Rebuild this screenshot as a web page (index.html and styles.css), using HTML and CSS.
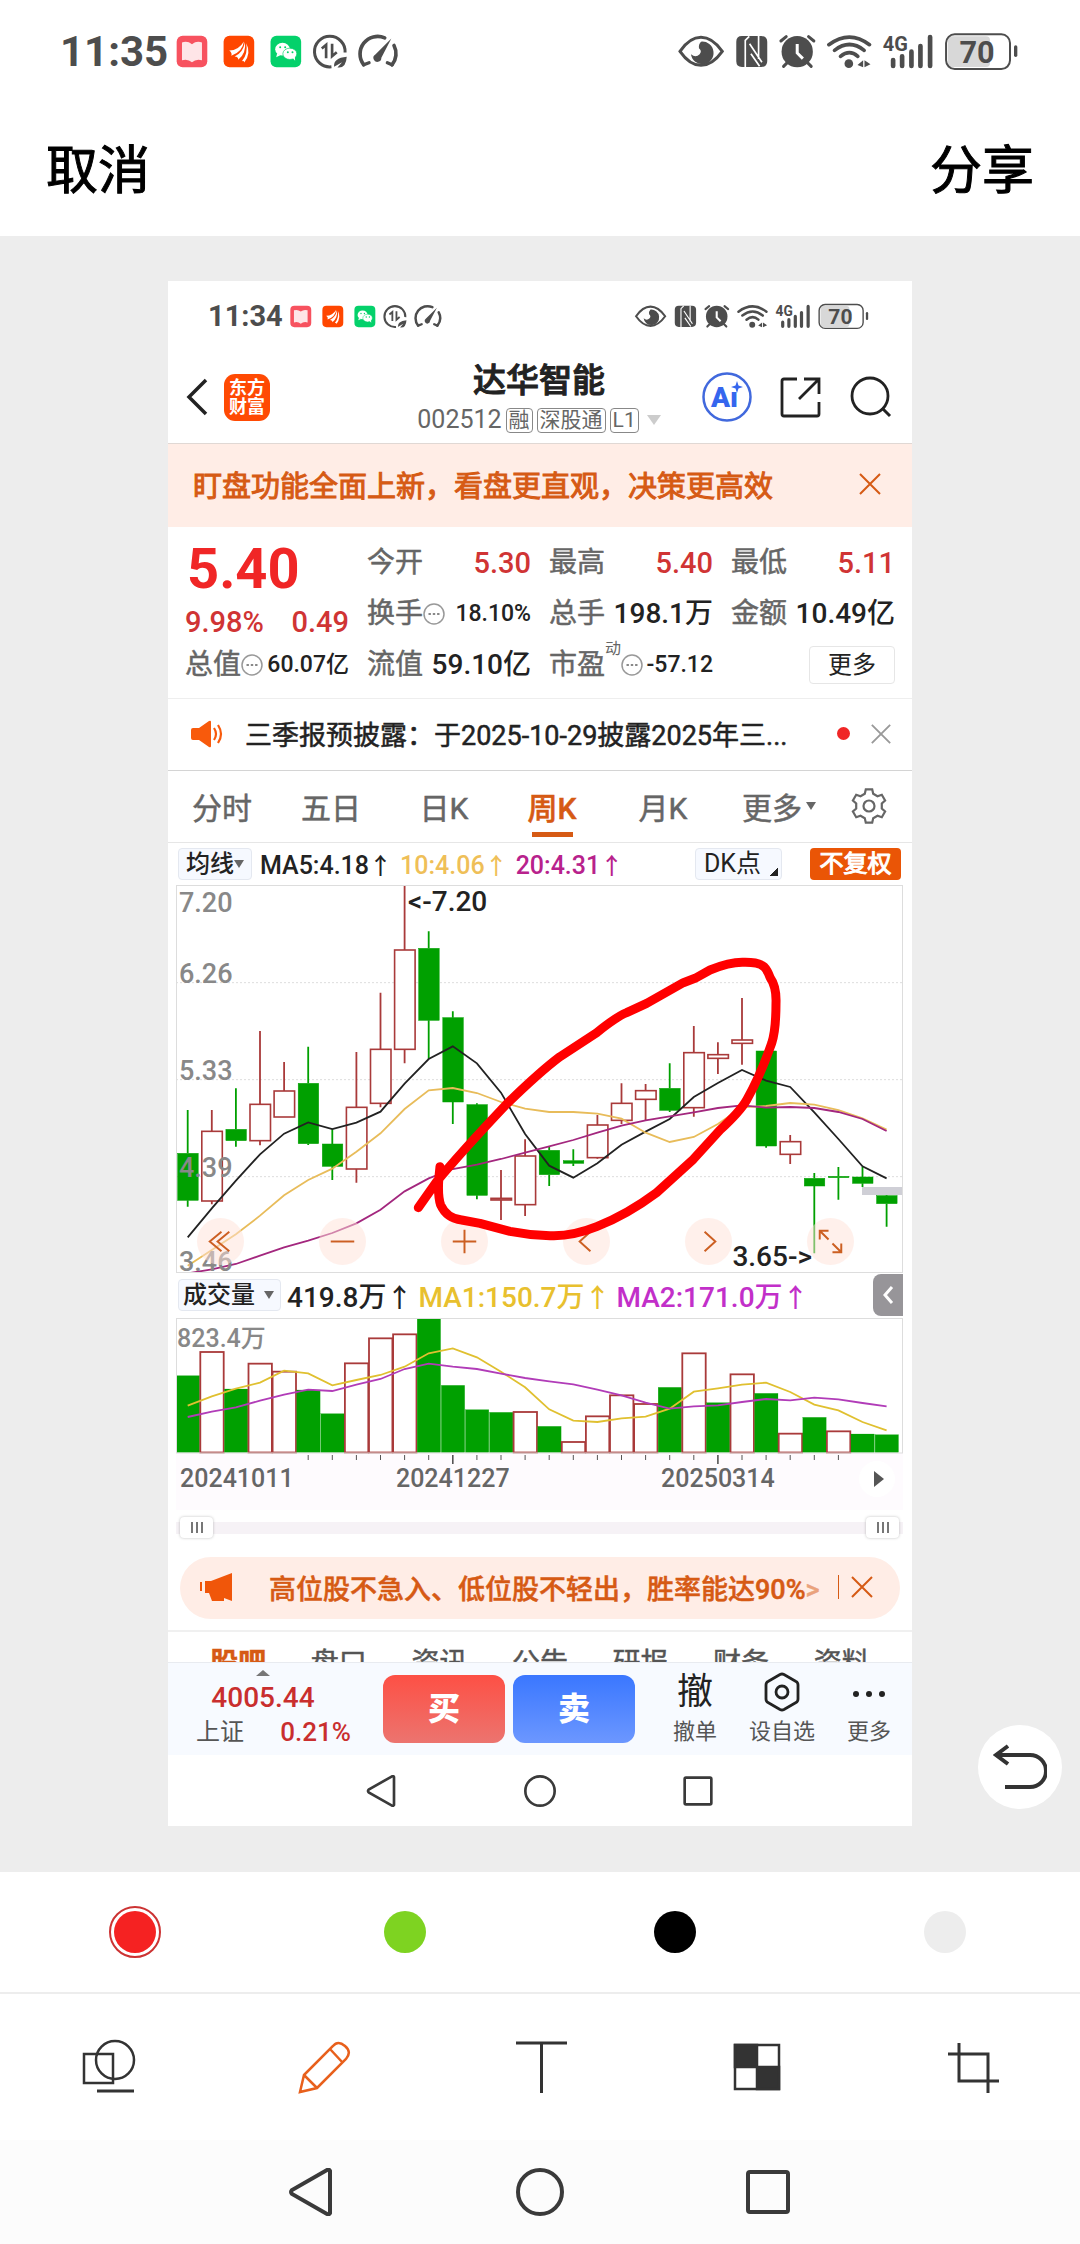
FILE: index.html
```html
<!DOCTYPE html>
<html lang="zh-CN">
<head>
  <meta charset="UTF-8" />
  <meta name="viewport" content="width=device-width, initial-scale=1.0"/>
  <title>编辑截图</title>
  <link rel="stylesheet" href="styles.css">
</head>
<body>

  <!-- shared icons -->
  <svg class="defs" aria-hidden="true">
    <symbol id="status-left" viewBox="380 36 670 110">
      <rect x="382" y="44" width="92" height="94" rx="18" fill="#f7525f"/>
      <path d="M398 64q16-6 30 5 14-11 30-5v53q-18-5-30 6-12-11-30-6z" fill="#fff" opacity=".85"/>
      <rect x="523" y="44" width="92" height="94" rx="18" fill="#ff4600"/>
      <path d="M540 88q28 0 44-27-4 31-38 43 4-8-6-16zM556 106q26-12 31-43 5 32-20 53 1-9-11-10zM578 120q19-22 13-54 16 30-6 58 0-6-7-4z" fill="#fff"/>
      <rect x="664" y="44" width="92" height="94" rx="18" fill="#04d16b"/>
      <ellipse cx="700" cy="84" rx="22" ry="19" fill="#fff"/><path d="M684 96l-3 12 12-6z" fill="#fff"/>
      <ellipse cx="722" cy="98" rx="21" ry="17" fill="#fff" stroke="#04d16b" stroke-width="2"/><path d="M730 110l8 9-1-14z" fill="#fff"/>
      <g fill="#04d16b"><circle cx="693" cy="78" r="3"/><circle cx="708" cy="78" r="3"/><circle cx="716" cy="93" r="3"/><circle cx="730" cy="93" r="3"/></g>
      <g fill="none" stroke="#4d4d4d" stroke-width="9">
        <path d="M847 137A46 46 0 1 1 888 94"/>
        <path d="M818 82l13-11v40M849 68v37l14-12" stroke-width="8"/>
        <path d="M944 131A53 53 0 0 1 1007 50M1035 73A53 53 0 0 1 1029 131" stroke-width="11" stroke-linecap="round"/>
        <path d="M944 131l16-6M1029 131l-14-6" stroke-width="10" stroke-linecap="round"/>
      </g>
      <path d="M855 137q-3-26 38-30-2 36-28 32l14-16z" fill="#4d4d4d"/>
      <path d="M979 100l48-48-30 58a12 12 0 1 1-18-10z" fill="#4d4d4d"/>
    </symbol>
    <symbol id="status-right" viewBox="20 30 1030 120">
      <g fill="none" stroke="#4d4d4d" stroke-linecap="round">
        <path d="M29 91Q58 49 92 49t64 42q-30 42-64 42T29 91z" stroke-width="9"/>
        <path d="M332 60l16-13M431 60l-16-13M340 136l12-12M423 136l-12-12" stroke-width="9"/>
        <path d="M476 71Q538 25 598 71" stroke-width="11"/><path d="M493 88Q538 53 582 88" stroke-width="11"/><path d="M511 106Q538 84 563 106" stroke-width="11"/>
        <path d="M669 117v18M696 106v29M724 92v43M751 75v60M780 48v87" stroke-width="14"/>
        <path d="M1037 78v25" stroke-width="10"/>
      </g>
      <path d="M92 62a34 34 0 1 1-30 38q14 12 26 0 8-10-2-18-2-12 6-20z" fill="#4d4d4d"/>
      <path d="M215 45h58q18 0 18 18v57q0 18-18 18h-58q-17 0-17-18V63q0-18 17-18z" fill="#4d4d4d"/>
      <path d="M225 138V58l12-12M265 45v69M238 68l37 56M242 98l26 38" fill="none" stroke="#fff" stroke-width="5"/>
      <circle cx="381" cy="92" r="47" fill="#4d4d4d"/><path d="M381 69v27l17 17" fill="none" stroke="#fff" stroke-width="9"/>
      <circle cx="536" cy="128" r="13" fill="#4d4d4d"/><path d="M562 132l17-14v21zM583 118v21l18-9z" fill="#4d4d4d"/>
      <text x="638" y="90" font-size="60" font-weight="700" fill="#4d4d4d">4G</text>
      <rect x="834" y="46" width="126" height="92" rx="12" fill="#d8d8d8"/>
      <rect x="828" y="40" width="192" height="104" rx="26" fill="none" stroke="#4d4d4d" stroke-width="6"/>
      <text x="921" y="125" font-size="92" font-weight="700" text-anchor="middle" fill="#4d4d4d">70</text>
    </symbol>
    <symbol id="close" viewBox="0 0 24 24"><path d="M2 2l20 20M22 2L2 22" fill="none" stroke="currentColor" stroke-width="2"/></symbol>
    <symbol id="dots" viewBox="0 0 22 22"><circle cx="11" cy="11" r="10" fill="none" stroke="#999" stroke-width="1.5"/><path d="M5.500 11h2.400M9.800 11h2.400M14.100 11h2.400" stroke="#888" stroke-width="2.200"/></symbol>
    <symbol id="nav-back" viewBox="0 0 48 48"><path d="M42 3v42q-1 2-3 1L4 26q-2-2 0-4L39 2q2-1 3 1z" fill="none" stroke="#3a3a3a" stroke-width="4"/></symbol>
    <symbol id="nav-home" viewBox="0 0 48 48"><circle cx="24" cy="24" r="22" fill="none" stroke="#3a3a3a" stroke-width="4"/></symbol>
    <symbol id="nav-recent" viewBox="0 0 48 48"><rect x="4" y="4" width="40" height="40" rx="2" fill="none" stroke="#3a3a3a" stroke-width="4"/></symbol>
  </svg>

  <header class="editor-header">
    <div class="status">
      <span class="status-time">11:35</span>
      <svg class="status-left"><use href="#status-left"/></svg>
      <svg class="status-right"><use href="#status-right"/></svg>
    </div>
    <div class="editor-actions">
      <button>取消</button>
      <button>分享</button>
    </div>
  </header>

  <main class="canvas">
    <div class="shot">
      <div class="status status-small">
        <span class="status-time">11:34</span>
        <svg class="status-left"><use href="#status-left"/></svg>
        <svg class="status-right"><use href="#status-right"/></svg>
      </div>

      <div class="stock-header">
        <div class="header-side">
          <button aria-label="返回"><svg width="22" height="38" viewBox="0 0 22 38"><path d="M20 2L3 19l17 17" fill="none" stroke="#222" stroke-width="3.500"/></svg></button>
          <span class="logo">东方<br>财富</span>
        </div>
        <div class="stock-name">
          <h1>达华智能</h1>
          <p>002512<span class="tag">融</span><span class="tag">深股通</span><span class="tag">L1</span><i class="caret caret-light"></i></p>
        </div>
        <div class="header-side header-right">
          <button aria-label="AI"><svg width="50" height="50" viewBox="0 0 50 50"><circle cx="25" cy="25" r="23.500" fill="none" stroke="#4169dd" stroke-width="2.500"/><text x="9" y="35" font-size="28" font-weight="900" fill="#3566ee">Aı</text><path d="M35 9l1.500 4.500L41 15l-4.500 1.500L35 21l-1.500-4.500L29 15l4.500-1.500z" fill="#3566ee"/></svg></button>
          <button aria-label="分享"><svg width="42" height="42" viewBox="0 0 42 42"><path d="M17 3H4q-2 0-2 2v33q0 2 2 2h33q2 0 2-2V26M24 3h15v15M39 3L19 23" fill="none" stroke="#222" stroke-width="2.800"/></svg></button>
          <button aria-label="搜索"><svg width="42" height="42" viewBox="0 0 42 42"><circle cx="20" cy="20" r="18" fill="none" stroke="#222" stroke-width="2.800"/><path d="M32 32l8 8" stroke="#222" stroke-width="3"/></svg></button>
        </div>
      </div>

      <div class="banner">
        <span>盯盘功能全面上新，看盘更直观，决策更高效</span>
        <button aria-label="关闭"><svg width="24" height="24"><use href="#close"/></svg></button>
      </div>

      <section class="quote">
        <div class="quote-main">
          <strong>5.40</strong>
          <p><span>9.98%</span><span>0.49</span></p>
        </div>
        <div class="cell"><span>今开</span><b class="up">5.30</b></div>
        <div class="cell"><span>最高</span><b class="up">5.40</b></div>
        <div class="cell"><span>最低</span><b class="up">5.11</b></div>
        <div class="cell"><span>换手</span><svg width="22" height="22"><use href="#dots"/></svg><b class="small">18.10%</b></div>
        <div class="cell"><span>总手</span><b>198.1万</b></div>
        <div class="cell"><span>金额</span><b>10.49亿</b></div>
        <div class="cell"><span>总值</span><svg width="22" height="22"><use href="#dots"/></svg><b class="small">60.07亿</b></div>
        <div class="cell"><span>流值</span><b>59.10亿</b></div>
        <div class="cell"><span>市盈</span><sup>动</sup><svg width="22" height="22"><use href="#dots"/></svg><b class="small">-57.12</b></div>
        <div class="cell cell-more"><button>更多</button></div>
      </section>

      <div class="notice">
        <svg width="32" height="28" viewBox="0 0 32 28"><path d="M2 8h6L18 1q2-1 2 1v24q0 2-2 1L8 20H2q-2 0-2-2v-8q0-2 2-2z" fill="#f85a0c"/><path d="M23 8q4 6 0 12M27 5q6 9 0 18" fill="none" stroke="#f85a0c" stroke-width="2.200"/></svg>
        <p>三季报预披露：于2025-10-29披露2025年三...</p>
        <i class="red-dot"></i>
        <button aria-label="关闭"><svg width="22" height="22"><use href="#close"/></svg></button>
      </div>

      <div class="period-tabs">
        <button>分时</button>
        <button>五日</button>
        <button>日K</button>
        <button class="active">周K</button>
        <button>月K</button>
        <button>更多<i class="caret"></i></button>
        <button aria-label="设置"><svg width="36" height="36" viewBox="0 0 36 36" fill="none" stroke="#666" stroke-width="2.200"><path d="M14.800 1.300h6.400l1 4.400 4.300 2.500 4.300-1.400 3.300 5.700-3.300 3v5l3.300 3-3.300 5.700-4.300-1.400-4.300 2.500-1 4.400h-6.400l-1-4.400-4.300-2.500-4.300 1.400-3.300-5.700 3.300-3v-5l-3.300-3 3.300-5.700 4.300 1.400 4.300-2.500z"/><circle cx="18" cy="18" r="5.500"/></svg></button>
      </div>

      <div class="chart-area">
        <div class="legend">
          <label class="picker"><select aria-label="均线"><option>均线</option></select><i class="caret"></i></label>
          <span>MA5:4.18<i class="arrow">↑</i></span>
          <span class="yellow">10:4.06<i class="arrow">↑</i></span>
          <span class="purple">20:4.31<i class="arrow">↑</i></span>
          <button class="dk">DK点</button>
          <button class="adjust">不复权</button>
        </div>

        <div class="kline">
          <svg id="kline" viewBox="0 0 727 388"></svg>
          <div class="chart-controls">
            <button aria-label="快退"><svg viewBox="0 0 48 48"><path d="M25 14L13 24l12 10M33 14L21 24l12 10"/></svg></button>
            <button aria-label="缩小"><svg viewBox="0 0 48 48"><path d="M12 24h24"/></svg></button>
            <button aria-label="放大"><svg viewBox="0 0 48 48"><path d="M12 24h24M24 12v24"/></svg></button>
            <button aria-label="左移"><svg viewBox="0 0 48 48"><path d="M28 14L17 24l11 10"/></svg></button>
            <button aria-label="右移"><svg viewBox="0 0 48 48"><path d="M20 14l11 10-11 10"/></svg></button>
            <button aria-label="全屏"><svg viewBox="0 0 48 48"><path d="M13 22v-9h9M13 13l9 9M35 26v9h-9M35 35l-9-9"/></svg></button>
          </div>
          <!-- hand drawn mark -->
          <svg class="mark" viewBox="0 0 727 388">
            <path transform="translate(-16 -15) scale(.33333)" d="M775 1013L830 935Q900 850 1040 702Q1140 605 1200 560L1310 488Q1370 440 1400 428L1460 400L1570 338L1605 325L1650 300Q1710 276 1750 277Q1795 276 1812 290Q1822 300 1830 322Q1850 350 1848 400Q1848 480 1835 520Q1800 620 1760 690Q1740 725 1680 780L1600 868L1490 968Q1400 1035 1310 1070Q1235 1100 1170 1097Q1110 1096 1050 1084L960 1060L905 1050Q860 1045 842 1005Q830 970 840 890"/>
          </svg>
        </div>

        <div class="legend volume-legend">
          <label class="picker"><select aria-label="成交量"><option>成交量</option></select><i class="caret"></i></label>
          <span>419.8万<i class="arrow">↑</i></span>
          <span class="gold">MA1:150.7万<i class="arrow">↑</i></span>
          <span class="violet">MA2:171.0万<i class="arrow">↑</i></span>
          <button class="collapse" aria-label="展开"><svg width="12" height="20" viewBox="0 0 12 20"><path d="M10 2L3 10l7 8" fill="none" stroke="#fff" stroke-width="3"/></svg></button>
        </div>
        <svg id="volume" viewBox="0 0 727 192"></svg>

        <div class="range">
          <input type="range" min="0" max="100" value="0" aria-label="开始">
          <input type="range" min="0" max="100" value="100" aria-label="结束">
        </div>
      </div>

      <div class="promo">
        <svg width="34" height="28" viewBox="0 0 34 28"><path d="M1 9v9" stroke="#f0560a" stroke-width="2"/><path d="M5 8h6L32 0v28l-8-3v3H12l-3-8H5z" fill="#f0560a"/></svg>
        <p>高位股不急入、低位股不轻出，胜率能达90%<span>&gt;</span></p>
        <i class="divider"></i>
        <button aria-label="关闭"><svg width="24" height="24"><use href="#close"/></svg></button>
      </div>

      <div class="info-tabs">
        <button class="active">股吧</button>
        <button>盘口</button>
        <button>资讯</button>
        <button>公告</button>
        <button>研报</button>
        <button>财务</button>
        <button>资料</button>
      </div>

      <div class="trade-bar">
        <div class="index">
          <div class="index-value">
            <i class="caret caret-up"></i>
            <b>4005.44</b>
          </div>
          <p><span>上证</span><b>0.21%</b></p>
        </div>
        <button class="buy">买</button>
        <button class="sell">卖</button>
        <button class="action"><span class="glyph">撤</span>撤单</button>
        <button class="action"><svg width="36" height="40" viewBox="0 0 36 40" fill="none" stroke="#222" stroke-width="2.800"><path d="M16 2.500q2-1 4 0l12 7q2 1 2 3.500v14q0 2.500-2 3.500l-12 7q-2 1-4 0l-12-7q-2-1-2-3.500V13q0-2.500 2-3.500z"/><circle cx="18" cy="20" r="6"/></svg>设自选</button>
        <button class="action"><svg width="36" height="40" viewBox="0 0 36 40" fill="#222"><circle cx="5" cy="22" r="3"/><circle cx="18" cy="22" r="3"/><circle cx="31" cy="22" r="3"/></svg>更多</button>
      </div>

      <nav class="system-nav system-nav-small">
        <button aria-label="返回"><svg><use href="#nav-back"/></svg></button>
        <button aria-label="主页"><svg><use href="#nav-home"/></svg></button>
        <button aria-label="最近"><svg><use href="#nav-recent"/></svg></button>
      </nav>
    </div>

    <button class="undo" aria-label="撤销"><svg width="54" height="48" viewBox="0 0 54 48"><path d="M3 12h34a16 16 0 0 1 0 32H12M15 3L3 12l12 9" fill="none" stroke="#333" stroke-width="4"/></svg></button>
  </main>

  <footer>
    <div class="colors">
      <label><input type="radio" name="color" class="red" aria-label="红色" checked></label>
      <label><input type="radio" name="color" class="green" aria-label="绿色"></label>
      <label><input type="radio" name="color" class="black" aria-label="黑色"></label>
      <label><input type="radio" name="color" class="grey" aria-label="灰色"></label>
    </div>
    <div class="tools">
      <button aria-label="图形"><svg viewBox="0 0 56 56"><rect x="4" y="15" width="29" height="29"/><circle cx="35" cy="21" r="19"/><path d="M17 52h37" stroke-width="3"/></svg></button>
      <button class="active" aria-label="画笔"><svg viewBox="0 0 56 56"><path d="M4 53l4-17L37 7q5-6 12 0t1 13L21 49zM8 36l13 13M34 10l13 14"/></svg></button>
      <button aria-label="文字"><svg viewBox="0 0 56 56"><path d="M4 4h51M29.500 4v50" stroke-width="3"/></svg></button>
      <button aria-label="马赛克"><svg viewBox="0 0 56 56"><rect x="7" y="6" width="44" height="44"/><path d="M7 6h22v22H7zM29 28h22v22H29z" fill="#333"/></svg></button>
      <button aria-label="裁剪"><svg viewBox="0 0 56 56"><path d="M4 15h40v39M15 4v38h40" stroke-width="3"/></svg></button>
    </div>
    <nav class="system-nav">
      <button aria-label="返回"><svg><use href="#nav-back"/></svg></button>
      <button aria-label="主页"><svg><use href="#nav-home"/></svg></button>
      <button aria-label="最近"><svg><use href="#nav-recent"/></svg></button>
    </nav>
  </footer>

  <script src="chart.js"></script>
</body>
</html>
```

FILE: styles.css
```css
* {
  box-sizing: border-box;
}

body {
  margin: 0;
  font-family: Roboto, "Noto Sans CJK SC", sans-serif;
  background-color: #fff;
  color: #222;
}

h1, p {
  margin: 0;
}

i {
  font-style: normal;
}

button {
  padding: 0;
  border: none;
  background: none;
  font-family: inherit;
  font-size: inherit;
  color: inherit;
  cursor: pointer;
}

svg {
  display: block;
}

.defs {
  width: 0;
  height: 0;
  position: absolute;
}

.caret {
  display: inline-block;
  border: 5px solid transparent;
  border-top: 8px solid #666;
  border-bottom: none;
}

/* status bar, same markup at two sizes */
.status {
  display: flex;
  align-items: center;
  height: 102px;
  padding: 0 60px;
  font-size: 42px;
  color: #4d4d4d;
}

.status-time {
  font-weight: bold;
}

.status-left {
  width: 223px;
  height: 37px;
  margin-left: 8px;
}

.status-right {
  width: 343px;
  height: 40px;
  margin-left: auto;
}

.status-small {
  height: 70px;
  padding: 0 42px 0 40px;
  font-size: 29px;
}

.status-small .status-left {
  width: 154px;
  height: 25px;
  margin-left: 6px;
}

.status-small .status-right {
  width: 236px;
  height: 28px;
}

.editor-actions {
  display: flex;
  justify-content: space-between;
  align-items: center;
  height: 134px;
  padding: 0 46px 6px;
  font-size: 52px;
  color: #000;
  -webkit-text-stroke: 1px;
}

.canvas {
  position: relative;
  padding: 45px 168px 46px;
  background-color: #ededed;
}

.shot {
  background-color: #fff;
}

/* stock header */
.stock-header {
  display: grid;
  grid-template-columns: 1fr auto 1fr;
  align-items: center;
  height: 92px;
  padding: 0 20px 0 18px;
}

.header-side {
  display: flex;
  align-items: center;
  gap: 16px;
}

.header-right {
  justify-content: flex-end;
  gap: 28px;
}

.logo {
  padding: 4px 5px 5px;
  border-radius: 11px;
  background-color: #ff4a03;
  color: #fff;
  font-size: 18px;
  line-height: 19px;
  font-weight: bold;
}

.stock-name {
  padding-top: 4px;
  text-align: center;
}

.stock-name h1 {
  font-size: 33px;
  line-height: 42px;
  font-weight: 500;
  -webkit-text-stroke: 1px;
}

.stock-name p {
  display: flex;
  align-items: center;
  gap: 4px;
  font-size: 25px;
  line-height: 36px;
  color: #666;
}

.tag {
  padding: 0 2px;
  border: 1px solid #888;
  border-radius: 4px;
  font-size: 21px;
  line-height: 23px;
}

.caret-light {
  margin-left: 4px;
  border-width: 7px;
  border-top: 10px solid #ccc;
}

.banner {
  display: flex;
  justify-content: space-between;
  align-items: center;
  height: 84px;
  padding: 0 30px 3px 25px;
  border-top: 1px solid #e0d8d4;
  background-color: #ffede6;
  color: #d65a14;
  font-size: 29px;
  -webkit-text-stroke: 1px;
}

/* quote */
.quote {
  display: grid;
  grid-template-columns: repeat(4, 1fr);
  grid-auto-rows: 51px;
  column-gap: 18px;
  padding: 10px 17px 8px;
  border-bottom: 1px solid #eee;
}

.quote-main {
  grid-row: span 2;
  color: #d03434;
}

.quote-main strong {
  display: block;
  padding-left: 2px;
  color: #f02626;
  font-size: 56px;
  line-height: 64px;
}

.quote-main p {
  display: flex;
  justify-content: space-between;
  font-size: 29px;
  line-height: 42px;
  font-weight: 500;
}

.cell {
  display: flex;
  align-items: center;
  font-size: 28px;
  line-height: 40px;
  white-space: nowrap;
}

.cell span {
  color: #666;
  -webkit-text-stroke: 0.5px;
}

.cell b {
  margin-left: auto;
  font-weight: 500;
}

.cell .small {
  font-size: 23px;
}

.cell .up {
  color: #d03434;
  font-size: 29px;
}

.cell sup {
  align-self: flex-start;
  font-size: 16px;
  line-height: 20px;
  color: #666;
}

.cell-more {
  justify-content: flex-end;
}

.cell-more button {
  width: 86px;
  height: 38px;
  border: 1px solid #e6e6e6;
  border-radius: 4px;
  font-size: 24px;
  line-height: 34px;
}

.notice {
  display: flex;
  align-items: center;
  height: 72px;
  padding: 0 20px 2px 23px;
  border-bottom: 1px solid #d4d4d4;
  font-size: 27px;
}

.notice p {
  flex: 1;
  margin-left: 22px;
  white-space: nowrap;
  -webkit-text-stroke: 0.5px;
}

.notice button {
  color: #999;
}

.red-dot {
  width: 13px;
  height: 13px;
  margin-right: 20px;
  border-radius: 50%;
  background-color: #f02626;
}

.period-tabs {
  display: grid;
  grid-template-columns: 108fr 110fr 116fr 100fr 122fr 110fr 70fr;
  height: 72px;
  padding-right: 8px;
  border-bottom: 1px solid #e6e6e6;
  color: #666;
  font-size: 30px;
  -webkit-text-stroke: 0.5px;
}

.period-tabs button {
  display: flex;
  align-items: center;
  justify-content: center;
  gap: 4px;
  padding-bottom: 2px;
  border: solid transparent;
  border-width: 5px 0;
}

.period-tabs .active {
  color: #d65a14;
  font-weight: 500;
  background: linear-gradient(#d65a14, #d65a14) center bottom / 41px 5px no-repeat;
}

/* charts */
.chart-area {
  padding: 0 9px 0 8px;
}

.legend {
  display: flex;
  align-items: center;
  height: 42px;
  padding-left: 2px;
  gap: 8px;
  font-size: 25px;
  font-weight: 500;
  white-space: nowrap;
}

.arrow {
  font-family: "Noto Sans CJK SC", sans-serif;
  font-size: 23px;
  line-height: 30px;
}

.picker {
  display: flex;
  align-items: center;
  height: 32px;
  padding: 0 7px;
  border: 1px solid #e4e8f0;
  border-radius: 4px;
  background-color: #f6f9ff;
}

.picker select {
  appearance: none;
  padding: 0;
  border: none;
  background: none;
  font: inherit;
  font-size: 24px;
  line-height: 30px;
  color: #222;
}

.dk {
  width: 87px;
  height: 32px;
  margin-left: auto;
  padding-right: 12px;
  border: 1px solid #e4e8f0;
  border-radius: 4px;
  background: linear-gradient(135deg, transparent 50%, #222 50%) right 3px bottom 3px / 8px 8px no-repeat #f6f9ff;
  line-height: 28px;
}

.adjust {
  width: 91px;
  height: 32px;
  margin: 0 2px 0 20px;
  border-radius: 4px;
  background-color: #ea5506;
  color: #fff;
  font-size: 24px;
  line-height: 30px;
  -webkit-text-stroke: 1px;
}

.yellow {
  color: #efbf58;
}

.purple {
  color: #b8228c;
}

.gold {
  color: #e8c02e;
}

.violet {
  color: #c22fc9;
}

.kline {
  position: relative;
}

#kline, #volume, .mark {
  width: 100%;
}

.mark {
  position: absolute;
  top: 0;
  left: 0;
  pointer-events: none;
  overflow: visible;
}

.mark path {
  fill: none;
  stroke: #f00;
  stroke-width: 27;
  stroke-linecap: round;
  stroke-linejoin: round;
}

.chart-controls {
  position: absolute;
  left: 21px;
  right: 49px;
  bottom: 8px;
  display: flex;
  justify-content: space-between;
}

.chart-controls button {
  width: 47px;
  height: 47px;
  border-radius: 50%;
  background-color: rgba(255, 225, 215, 0.5);
}

.chart-controls path {
  fill: none;
  stroke: #cc5f22;
  stroke-width: 2;
}

.frame {
  fill: none;
  stroke: #ddd;
}

.grid {
  stroke: #ddd;
  stroke-dasharray: 2 2;
}

.axis-label {
  fill: #888;
  font-size: 27px;
  font-weight: 500;
}

.volume-label {
  font-size: 25px;
}

.note {
  fill: #222;
  font-size: 28px;
  font-weight: 500;
}

.date {
  fill: #666;
  font-size: 25px;
  font-weight: 500;
}

.volume-legend {
  height: 45px;
  padding-bottom: 2px;
  gap: 6px;
  font-size: 28px;
}

.volume-legend .picker {
  padding: 0 6px 0 4px;
  gap: 9px;
}

.volume-legend .arrow {
  font-size: 26px;
}

.collapse {
  display: flex;
  align-items: center;
  justify-content: center;
  width: 30px;
  height: 42px;
  margin-left: auto;
  border-radius: 8px 0 0 8px;
  background-color: #979599;
}

.range {
  position: relative;
  height: 47px;
  background: linear-gradient(#f6f2f6, #f6f2f6) center 12px / 100% 12px no-repeat;
}

.range input {
  appearance: none;
  position: absolute;
  top: 7px;
  left: 4px;
  right: 4px;
  width: calc(100% - 8px);
  height: 21px;
  margin: 0;
  background: none;
  pointer-events: none;
}

.range input::-webkit-slider-thumb {
  appearance: none;
  width: 33px;
  height: 21px;
  border-radius: 4px;
  background: repeating-linear-gradient(90deg, #777 0 2px, #fff 2px 5px) center / 12px 11px no-repeat #fff;
  box-shadow: 0 0 3px rgba(0, 0, 0, 0.25);
  pointer-events: auto;
}

.promo {
  display: flex;
  align-items: center;
  height: 62px;
  margin: 0 12px 11px;
  padding: 0 26px 2px 20px;
  border-radius: 31px;
  background-color: #ffede6;
  color: #d65a14;
  font-size: 27px;
  font-weight: 500;
}

.promo p {
  flex: 1;
  margin-left: 35px;
  white-space: nowrap;
  -webkit-text-stroke: 0.5px;
}

.promo p span {
  opacity: 0.5;
}

.divider {
  width: 1px;
  height: 24px;
  margin-right: 11px;
  background-color: #d65a14;
}

/* only the top edge of this row shows above the trade bar */
.info-tabs {
  display: flex;
  justify-content: space-around;
  align-items: flex-start;
  height: 32px;
  padding: 16px 20px 0;
  border-top: 2px solid #f0f0f0;
  overflow: hidden;
  color: #555;
  font-size: 28px;
  line-height: 28px;
}

.info-tabs button {
  line-height: 32px;
  -webkit-text-stroke: 0.5px;
}

.info-tabs .active {
  color: #d65a14;
  font-weight: bold;
}

.trade-bar {
  display: flex;
  align-items: center;
  height: 93px;
  padding: 0 21px 0 22px;
  border-top: 1px solid #e8ebf0;
  background-color: #f7faff;
}

.index {
  width: 166px;
  margin-right: 27px;
  color: #c92e2e;
  font-size: 28px;
  line-height: 34px;
}

.index b {
  font-weight: 500;
}

.index-value {
  display: flex;
  flex-direction: column;
  align-items: center;
  padding-right: 20px;
}

.index p {
  display: flex;
  justify-content: space-between;
  padding: 0 5px 0 6px;
  font-size: 26px;
}

.index p span {
  color: #555;
  font-size: 24px;
}

.caret-up {
  border-width: 7px;
  border-top: none;
  border-bottom: 6px solid #777;
  margin-bottom: 5px;
}

.buy, .sell {
  width: 122px;
  height: 68px;
  margin-right: 8px;
  border-radius: 12px;
  background: linear-gradient(#fd5045, #ec746f);
  color: #fff;
  font-size: 32px;
  line-height: 64px;
  font-weight: 900;
}

.sell {
  margin-right: auto;
  background: linear-gradient(#3a77ff, #6c97ff);
}

.action {
  display: flex;
  flex-direction: column;
  align-items: center;
  gap: 2px;
  margin-left: 32px;
  padding-top: 3px;
  color: #555;
  font-size: 22px;
  line-height: 36px;
}

.action .glyph {
  color: #222;
  font-size: 36px;
  line-height: 40px;
}

.system-nav {
  display: flex;
  justify-content: center;
  align-items: center;
  gap: 180px;
  height: 104px;
  background-color: #fcfcfc;
}

.system-nav svg {
  width: 48px;
  height: 48px;
}

.system-nav-small {
  gap: 126px;
  height: 71px;
  background-color: #fff;
}

.system-nav-small svg {
  width: 32px;
  height: 32px;
}

.undo {
  position: absolute;
  right: 18px;
  bottom: 63px;
  display: flex;
  align-items: center;
  justify-content: center;
  width: 84px;
  height: 84px;
  border-radius: 50%;
  background-color: #fff;
}

/* editor footer */
.colors {
  display: grid;
  grid-template-columns: repeat(4, 1fr);
  justify-items: center;
  align-items: center;
  height: 120px;
}

.colors label {
  display: flex;
}

.colors input {
  appearance: none;
  width: 42px;
  height: 42px;
  margin: 0;
  border-radius: 50%;
}

.colors input:checked {
  outline: 2px solid #cc3333;
  outline-offset: 3px;
}

.red {
  background-color: #f52222;
}

.green {
  background-color: #7ed321;
}

.black {
  background-color: #000;
}

.grey {
  background-color: #ededed;
}

.tools {
  display: grid;
  grid-template-columns: repeat(5, 1fr);
  justify-items: center;
  align-items: center;
  height: 148px;
  border-top: 2px solid #ededed;
}

.tools svg {
  width: 56px;
  height: 56px;
  fill: none;
  stroke: #333;
  stroke-width: 2.5;
}

.tools .active svg {
  stroke: #e8601c;
}
```

FILE: chart.js
```js
// [up, high, open/close top, open/close bottom, low], y values on the chart's 3x grid
const candles = [
  [0, 720, 850, 991, 1010], [1, 720, 784, 993, 1003], [0, 655, 778, 812, 830],
  [1, 483, 703, 812, 826], [1, 576, 663, 741, 741], [0, 530, 640, 821, 825],
  [0, 778, 822, 889, 930], [1, 546, 712, 897, 938], [1, 368, 538, 700, 712],
  [1, 48, 240, 538, 580], [0, 184, 235, 451, 567], [0, 424, 443, 696, 762],
  [0, 700, 704, 976, 988], [1, 900, 985, 990, 1050], [1, 808, 858, 1004, 1038],
  [0, 831, 841, 914, 948], [0, 838, 872, 880, 888], [1, 735, 765, 863, 866],
  [1, 640, 700, 751, 762], [1, 642, 662, 688, 750], [0, 580, 655, 721, 726],
  [1, 468, 548, 713, 740], [1, 517, 554, 565, 612], [1, 384, 510, 520, 584],
  [0, 543, 543, 828, 833], [1, 795, 815, 853, 882], [0, 909, 925, 948, 1150],
  [0, 891, 919, 923, 989], [0, 890, 921, 940, 951], [0, 975, 977, 1001, 1070]
];

const ma = {
  '#222': [1102, 1015, 932, 853, 791, 757, 777, 758, 725, 641, 567, 529, 580, 668, 792, 887, 923, 880, 824, 785, 747, 681, 639, 600, 632, 651, 727, 807, 889, 925],
  '#e8bc5a': [1187, 1140, 1093, 1037, 976, 930, 896, 845, 790, 717, 661, 654, 669, 696, 716, 726, 726, 731, 746, 788, 816, 801, 762, 712, 708, 699, 704, 720, 745, 779],
  '#a3277e': [1210, 1198, 1182, 1157, 1132, 1112, 1089, 1060, 1019, 964, 925, 897, 884, 867, 848, 829, 810, 788, 767, 751, 739, 727, 714, 706, 713, 711, 714, 726, 747, 783]
};

const volumes = [
  [0, 345], [1, 274], [0, 385], [1, 309], [1, 333], [0, 388], [0, 459], [1, 308], [1, 233], [1, 221],
  [0, 172], [0, 374], [0, 447], [0, 455], [1, 454], [0, 497], [1, 544], [1, 467], [1, 404], [1, 430],
  [0, 380], [1, 278], [0, 426], [1, 341], [0, 398], [1, 519], [0, 470], [1, 512], [0, 520], [0, 522]
];

const volumeMa = {
  '#e0c030': [435, 407, 384, 366, 330, 338, 374, 358, 343, 318, 278, 263, 290, 333, 380, 446, 480, 484, 473, 468, 444, 393, 383, 372, 366, 394, 432, 449, 484, 509],
  '#b13cb8': [469, 453, 440, 420, 402, 387, 391, 372, 355, 325, 309, 318, 325, 339, 352, 362, 371, 387, 404, 426, 444, 437, 434, 424, 415, 419, 411, 416, 427, 437]
};

const GREEN = '#00a000';
const RED = '#a93a3a';

const centre = i => 11.7 + i * 24.1;

function line(values, color, top) {
  const points = values.map((v, i) => `${centre(i)},${(v - top) / 3}`).join(' ');
  return `<polyline points="${points}" fill="none" stroke="${color}" stroke-width="1.8"/>`;
}

function drawKline() {
  let out = '';
  [338, 629, 920].forEach(v => {
    const y = (v - 45) / 3;
    out += `<line class="grid" x1="0" x2="727" y1="${y}" y2="${y}"/>`;
  });
  candles.forEach(([up, high, top, bottom, low], i) => {
    const [h, t, b, l] = [high, top, bottom, low].map(v => (v - 45) / 3);
    const x = centre(i);
    const color = up ? RED : GREEN;
    out += `<path d="M${x} ${h}V${t}M${x} ${b}V${l}" stroke="${color}" stroke-width="1.8"/>`;
    out += `<rect x="${x - 10}" y="${t}" width="20.5" height="${b - t}" fill="${up ? '#fff' : GREEN}" stroke="${color}" stroke-width="${up ? 1.6 : 0.5}"/>`;
  });
  for (const color in ma) {
    out += line(ma[color], color, 45);
  }
  out += '<rect x="686" y="302" width="41" height="8" fill="#cfcfd6"/>';
  out += '<rect class="frame" x="0.5" y="0.5" width="726" height="387"/>';
  [['7.20', 27], ['6.26', 98], ['5.33', 195], ['4.39', 292], ['3.46', 386]].forEach(([text, y]) => {
    out += `<text class="axis-label" x="3" y="${y}">${text}</text>`;
  });
  out += '<text class="note" x="232" y="26">&lt;-7.20</text>';
  out += '<text class="note" x="636" y="381" text-anchor="end">3.65-&gt;</text>';
  document.getElementById('kline').innerHTML = out;
}

function drawVolume() {
  let out = '<rect y="135" width="727" height="57" fill="#fefbfe"/>';
  volumes.forEach(([up, top], i) => {
    const y = (top - 172) / 3;
    const x = centre(i) - 11.5;
    out += `<rect x="${x}" y="${y}" width="23.4" height="${134.5 - y}" fill="${up ? '#fff' : GREEN}" stroke="${up ? RED : GREEN}" stroke-width="${up ? 1.8 : 0.2}"/>`;
  });
  for (const color in volumeMa) {
    out += line(volumeMa[color], color, 172);
  }
  out += '<rect class="frame" x="0.5" y="0.5" width="726" height="134.5"/>';
  for (let i = 5; i <= 27; i++) {
    const big = i === 11 || i === 22;
    out += `<path d="M${centre(i)} 137v${big ? 9 : 5}" stroke="#555" stroke-width="${big ? 1.6 : 1}"/>`;
  }
  out += '<text class="axis-label volume-label" x="1" y="29">823.4万</text>';
  out += '<text class="date" x="4" y="169">20241011</text>';
  out += `<text class="date" x="${centre(11)}" y="169" text-anchor="middle">20241227</text>`;
  out += `<text class="date" x="${centre(22)}" y="169" text-anchor="middle">20250314</text>`;
  out += '<circle cx="701" cy="161" r="18" fill="#fff"/><path d="M698 153l10 8-10 8z" fill="#555"/>';
  document.getElementById('volume').innerHTML = out;
}

drawKline();
drawVolume();
```
